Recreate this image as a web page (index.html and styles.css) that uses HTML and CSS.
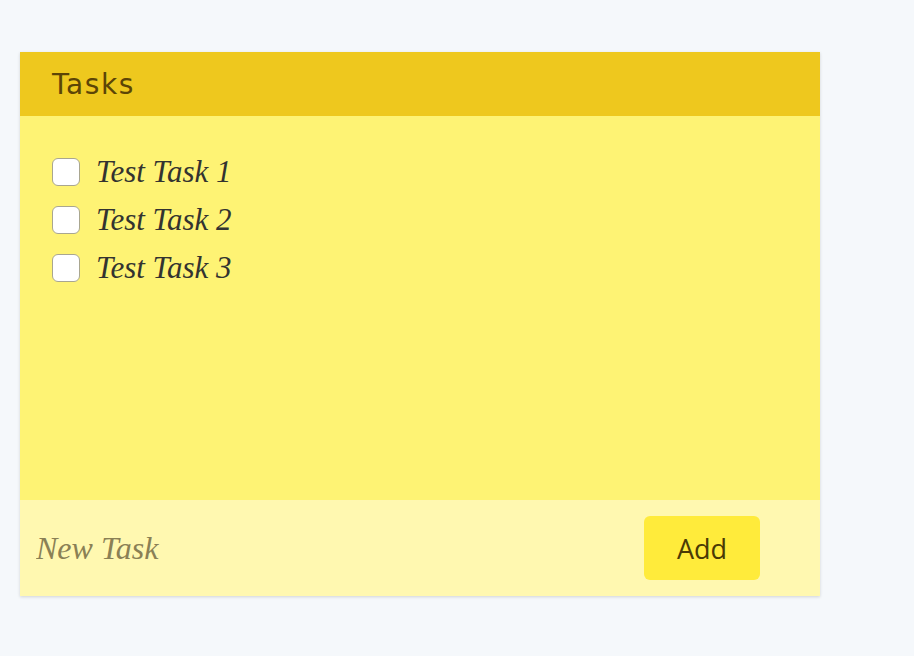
FILE: index.html
```html
<!DOCTYPE html>
<html>
<head>
<meta charset="utf-8">
<link rel="stylesheet" href="styles.css">
</head>
<body>
<div class="card">
  <div class="card-header">Tasks</div>
  <ul class="task-list">
    <li class="task"><span class="box"></span><span class="label">Test Task 1</span></li>
    <li class="task"><span class="box"></span><span class="label">Test Task 2</span></li>
    <li class="task"><span class="box"></span><span class="label">Test Task 3</span></li>
  </ul>
  <div class="card-footer">
    <input class="new-task" type="text" placeholder="New Task">
    <button class="add-btn">Add</button>
  </div>
</div>
</body>
</html>
```
FILE: styles.css
```css
html, body { margin: 0; padding: 0; }
body {
  background: #f5f8fb;
  padding: 52px 0 0 20px;
  width: 914px;
  height: 656px;
  box-sizing: border-box;
}
.card {
  width: 800px;
  box-shadow: 0 1px 3px rgba(0,0,0,0.15);
  display: flex;
  flex-direction: column;
}
.card-header {
  height: 64px;
  background: #eec81e;
  color: #5c4506;
  font-family: "DejaVu Sans", sans-serif;
  font-size: 28px;
  letter-spacing: 1.6px;
  padding-left: 32px;
  display: flex;
  align-items: center;
  box-sizing: border-box;
}
.task-list {
  list-style: none;
  margin: 0;
  padding: 32px 32px 0;
  height: 384px;
  box-sizing: border-box;
  background: #fef374;
}
.task {
  display: flex;
  align-items: center;
  height: 48px;
}
.box {
  width: 28px;
  height: 28px;
  box-sizing: border-box;
  background: #fff;
  border: 1px solid #a9a690;
  border-radius: 6px;
  margin-right: 16px;
}
.label {
  font-family: "Liberation Serif", serif;
  font-style: italic;
  font-size: 31px;
  color: #333330;
}
.card-footer {
  height: 96px;
  background: #fff8b0;
  display: flex;
  align-items: center;
  padding: 0 60px 0 16px;
  box-sizing: border-box;
}
.new-task {
  flex: 1;
  border: none;
  background: transparent;
  outline: none;
  font-family: "Liberation Serif", serif;
  font-style: italic;
  font-size: 32px;
  color: #333;
  padding: 0;
}
.new-task::placeholder { color: #8a8055; }
.add-btn {
  width: 116px;
  height: 64px;
  border: none;
  border-radius: 6px;
  background: #ffeb3b;
  color: #4a3a05;
  font-family: "Open Sans", sans-serif;
  font-size: 27px;
  padding: 0;
}
```
